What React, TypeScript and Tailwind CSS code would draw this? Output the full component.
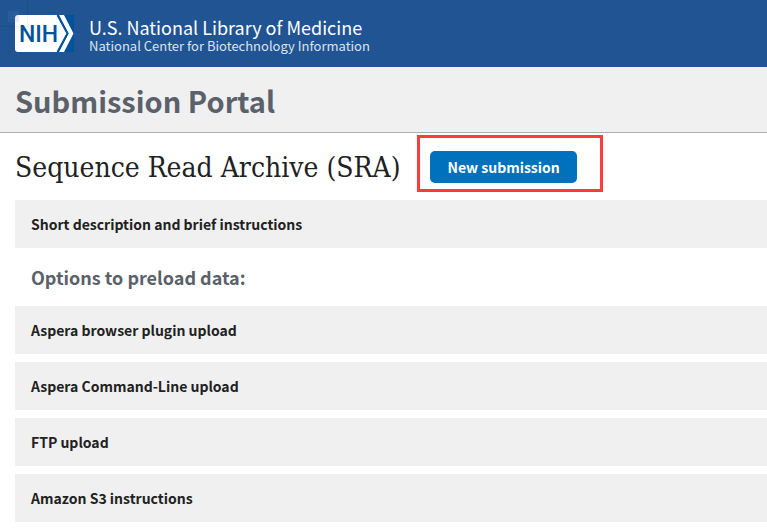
const sans = 'font-["Noto_Sans_CJK_SC","Open_Sans",sans-serif]';
const serif = 'font-["DejaVu_Serif_Condensed","DejaVu_Serif",serif]';

const preloadOptions = [
  'Aspera browser plugin upload',
  'Aspera Command-Line upload',
  'FTP upload',
  'Amazon S3 instructions',
];

function NihLogo() {
  return (
    <svg width="59" height="37" viewBox="0 0 59 37" role="img" aria-label="NIH">
      <path d="M40 0H59V37H40z" fill="#00529b" />
      <path d="M3 0H42L52 18.500L42 37H3Q0 37 0 34V3Q0 0 3 0z" fill="#fff" />
      <path d="M44 0H49L58.500 18.500L49 37H44L53.500 18.500z" fill="#fff" />
      <path d="M42.500 0L52.500 18.500L42.500 37" fill="none" stroke="#00529b" strokeWidth="2" />
      <text
        x="4"
        y="27"
        fill="#00529b"
        fontSize="23"
        fontWeight="500"
        className='font-["Roboto","Liberation_Sans",sans-serif]'
      >
        NIH
      </text>
    </svg>
  );
}

function Panel({ title }: { title: string }) {
  return (
    <button
      type="button"
      className="flex h-12 w-full items-center bg-[#f0f0f0] px-4 text-left text-[14px] leading-6 font-bold text-[#212121]"
    >
      {title}
    </button>
  );
}

export default function App() {
  return (
    <div className={`min-h-screen bg-white text-[#212121] ${sans}`}>
      <header className="relative flex min-h-[67px] items-center bg-[#205493] px-[15px] text-white">
        <a href="#nlm" className="flex items-center gap-[15px]">
          <NihLogo />
          <span className="flex flex-col pt-1">
            <span className="text-[18px] leading-5">U.S. National Library of Medicine</span>
            <span className="text-[13px] leading-[17px] text-[#dce4ef]">
              National Center for Biotechnology Information
            </span>
          </span>
        </a>
        <span className="absolute top-0 left-0 h-[27px] w-7 border-r border-b border-black/5" />
        <span className="absolute top-[11px] left-2 h-[11px] w-[11px] bg-[#6c8fc0]/15" />
      </header>

      <div className="border-b border-[#aeb0b5] bg-[#f0f0f0] px-[15px] pt-[17px] pb-[15px]">
        <p className="text-[29px] leading-[33px] font-bold text-[#5b616b]">Submission Portal</p>
      </div>

      <main className="pl-[15px]">
        <div className="flex items-center gap-[17px] pt-[2px] pb-2">
          <h1 className={`pt-2 text-[28px] leading-9 whitespace-nowrap ${serif}`}>
            Sequence Read Archive (SRA)
          </h1>
          <div className="border-3 border-[#ff3b3b] pt-[13px] pr-[23px] pb-[6px] pl-[10px]">
            <button
              type="button"
              className="block h-8 rounded-[5px] bg-[#0071bc] px-[17px] text-[14px] leading-8 font-bold whitespace-nowrap text-white"
            >
              New submission
            </button>
          </div>
        </div>

        <Panel title="Short description and brief instructions" />

        <h2 className="px-4 py-[15px] text-[18px] leading-7 font-bold text-[#5b616b]">
          Options to preload data:
        </h2>

        <div className="flex flex-col gap-2">
          {preloadOptions.map((title) => (
            <Panel key={title} title={title} />
          ))}
        </div>
      </main>
    </div>
  );
}
